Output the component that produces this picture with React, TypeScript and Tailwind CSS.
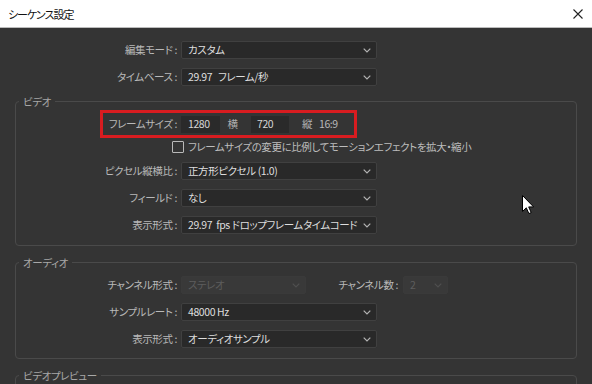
import React from 'react';

const labelCls = 'shrink-0 whitespace-nowrap text-right text-[#b9b9b9]';

function Chevron({ dim }: { dim?: boolean }) {
    return (
        <svg width="8" height="5" viewBox="0 0 8 5" className="shrink-0">
            <polyline points="0.7,0.7 4,4 7.3,0.7" fill="none" stroke={dim ? '#4f4f4f' : '#b4b4b4'} strokeWidth="1.2" />
        </svg>
    );
}

function Select({ value, className, disabled }: { value: string; className: string; disabled?: boolean }) {
    return (
        <div
            className={`ml-[4px] flex h-[18px] items-center justify-between rounded-[2px] border pl-[6px] pr-[5px] ${className} ${disabled
                ? 'border-[#3a3a3a] bg-[#393939] text-[#5d5d5d]'
                : 'border-[#404040] bg-[#292929] text-[#dedede]'
                }`}
        >
            <span className="whitespace-pre">{value}</span>
            <Chevron dim={disabled} />
        </div>
    );
}

function Row({ label, value, w = 'w-[161px]', className = '' }: { label: string; value: string; w?: string; className?: string }) {
    return (
        <div className={`flex h-[18px] items-center ${className}`}>
            <span className={`${labelCls} ${w}`}>{label}</span>
            <Select value={value} className="w-[196px]" />
        </div>
    );
}

function Legend({ children }: { children: React.ReactNode }) {
    return <legend className="ml-[3px] px-[4px] text-[10.5px] leading-[13px] text-[#a8a8a8]">{children}</legend>;
}

export default function App() {
    return (
        <div className="relative h-[384px] w-[592px] overflow-hidden bg-[#343434] font-['Noto_Sans_CJK_JP',sans-serif] text-[10.5px] leading-[14px] tracking-[-0.4px] [font-feature-settings:'palt']">
            {/* Title bar */}
            <div className="flex h-[28px] items-center justify-between border-b border-[#bcbcbc] bg-white pl-[8px] pr-[9px]">
                <span className="text-[11px] tracking-[-1px] text-[#111]">シーケンス設定</span>
                <svg width="10" height="10" viewBox="0 0 10 10">
                    <path d="M0.5 0.5 L9.5 9.5 M9.5 0.5 L0.5 9.5" stroke="#222" strokeWidth="1.1" />
                </svg>
            </div>

            <div className="px-[15px] pt-[13px]">
                <Row label="編集モード :" value="カスタム" w="w-[162px]" />
                <Row label="タイムベース :" value={'29.97\u00a0\u00a0\u00a0フレーム/秒'} w="w-[162px]" className="mt-[9px]" />

                {/* Video */}
                <fieldset className="mt-[9px] rounded-[4px] border border-[#4a4a4a] pb-[11px] pt-[2px]">
                    <Legend>ビデオ</Legend>
                    <div className="ml-[84px] flex h-[28px] w-[257px] items-center border-[3px] border-[#d81c20]">
                        <span className={`${labelCls} w-[74px]`}>フレームサイズ :</span>
                        <div className="ml-[4px] flex h-[17px] w-[39px] items-center bg-[#2a2a2a] pl-[7px] text-[#d6d6d6]">1280</div>
                        <span className="w-[31px] pr-[6px] text-center text-[#b0b0b0]">横</span>
                        <div className="flex h-[17px] w-[38px] items-center bg-[#2a2a2a] pl-[6px] text-[#d6d6d6]">720</div>
                        <span className="w-[30px] pl-[6px] text-center text-[#b0b0b0]">縦</span>
                        <span className="text-[#b9b9b9]">16:9</span>
                    </div>
                    <div className="flex h-[18px] items-center pl-[156px]">
                        <div className="h-[12px] w-[12px] rounded-[1px] border border-[#b9b9b9]" />
                        <span className="ml-[4px] whitespace-nowrap text-[#bdbdbd]">フレームサイズの変更に比例してモーションエフェクトを拡大・縮小</span>
                    </div>
                    <Row label="ピクセル縦横比 :" value="正方形ピクセル (1.0)" className="mt-[6px]" />
                    <Row label="フィールド :" value="なし" className="mt-[9px]" />
                    <Row label="表示形式 :" value={'29.97\u00a0\u00a0fps ドロップフレームタイムコード'} className="mt-[9px]" />
                </fieldset>

                {/* Audio */}
                <fieldset className="mt-[10px] rounded-[4px] border border-[#4a4a4a] pb-[10px] pt-[7px]">
                    <Legend>オーディオ</Legend>
                    <div className="flex h-[18px] items-center">
                        <span className={`${labelCls} w-[161px]`}>チャンネル形式 :</span>
                        <Select value="ステレオ" className="w-[125px]" disabled />
                        <span className={`${labelCls} w-[92px]`}>チャンネル数 :</span>
                        <Select value="2" className="ml-[5px] w-[45px]" disabled />
                    </div>
                    <Row label="サンプルレート :" value="48000 Hz" className="mt-[9px]" />
                    <Row label="表示形式 :" value="オーディオサンプル" className="mt-[9px]" />
                </fieldset>

                {/* Video preview */}
                <fieldset className="mt-[10px] h-[40px] rounded-[4px] border border-[#4a4a4a]">
                    <Legend>ビデオプレビュー</Legend>
                </fieldset>
            </div>

            {/* Mouse pointer */}
            <svg className="absolute left-[522px] top-[195px]" width="13" height="20" viewBox="0 0 13 20">
                <path d="M0.5 0.5 L0.5 16.5 L4.3 12.8 L6.9 18.6 L9.2 17.6 L6.7 11.9 L11.6 11.9 Z" fill="#fff" stroke="#000" strokeWidth="1" strokeLinejoin="round" />
            </svg>
        </div>
    );
}
